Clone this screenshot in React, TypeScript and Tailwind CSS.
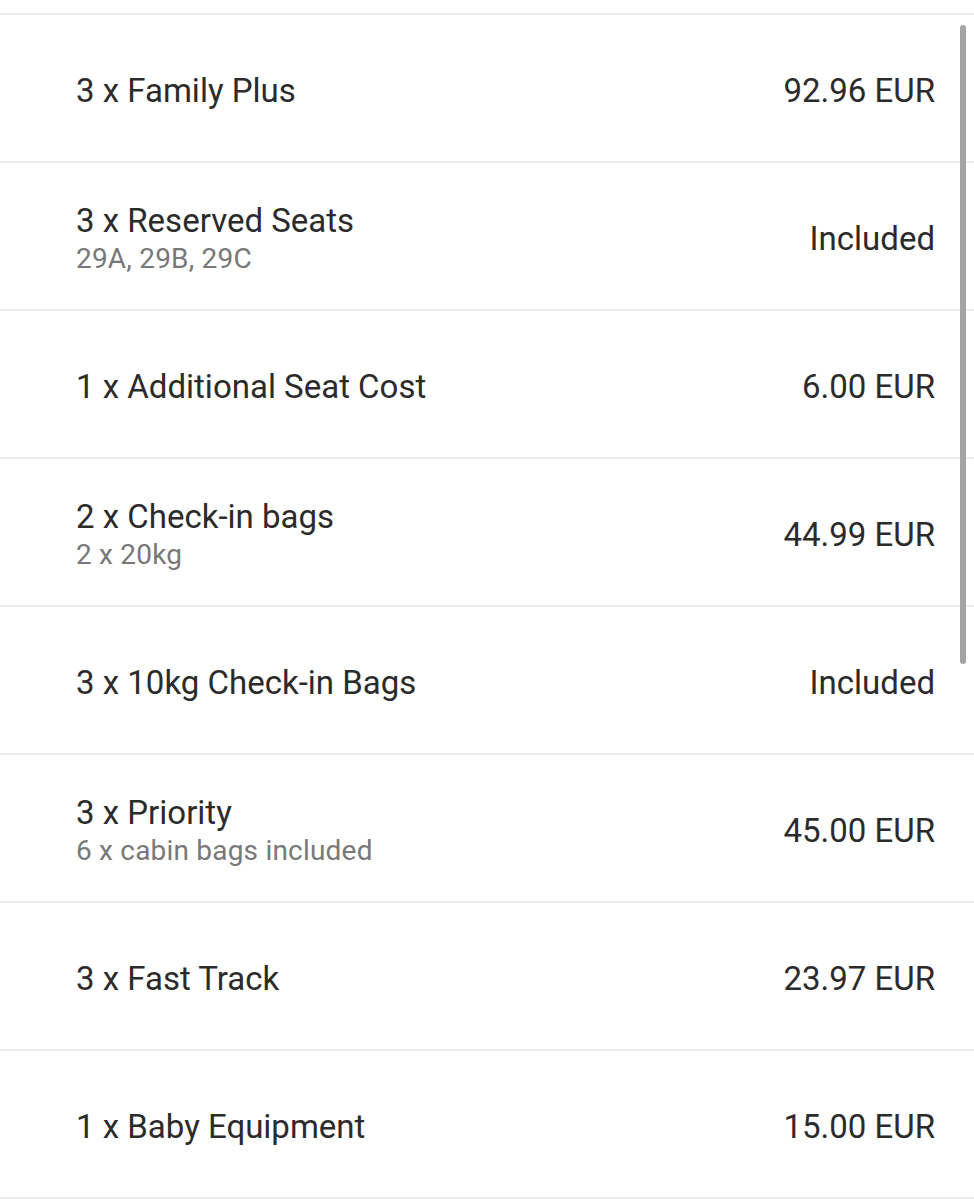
import React from "react";

type Item = { title: string; sub?: string; price: string };

const items: Item[] = [
  { title: "3 x Family Plus", price: "92.96 EUR" },
  { title: "3 x Reserved Seats", sub: "29A, 29B, 29C", price: "Included" },
  { title: "1 x Additional Seat Cost", price: "6.00 EUR" },
  { title: "2 x Check-in bags", sub: "2 x 20kg", price: "44.99 EUR" },
  { title: "3 x 10kg Check-in Bags", price: "Included" },
  { title: "3 x Priority", sub: "6 x cabin bags included", price: "45.00 EUR" },
  { title: "3 x Fast Track", price: "23.97 EUR" },
  { title: "1 x Baby Equipment", price: "15.00 EUR" },
];

export default function App() {
  return (
    <div
      className="relative w-[974px] h-[1200px] bg-white overflow-hidden"
      style={{ fontFamily: "Roboto, 'Liberation Sans', sans-serif" }}
    >
      <div className="h-[13px]" />
      {items.map((it, i) => (
        <div
          key={i}
          className="flex items-center justify-between h-[148px] border-t-2 border-[#ebebeb] pl-[76px] pr-[39px] pt-[6px]"
        >
          <div className="flex flex-col">
            <div className="text-[33px] leading-[40px] text-[#2b2b2b]">{it.title}</div>
            {it.sub && (
              <div className="text-[28px] leading-[36px] tracking-[0.2px] text-[#787878]">{it.sub}</div>
            )}
          </div>
          <div className="text-[33px] leading-[40px] text-[#2b2b2b]">{it.price}</div>
        </div>
      ))}
      <div className="border-t-2 border-[#ebebeb]" />
      <div className="absolute left-[960px] top-[25px] w-[6px] h-[639px] rounded-full bg-[#a3a3a3]" />
    </div>
  );
}
